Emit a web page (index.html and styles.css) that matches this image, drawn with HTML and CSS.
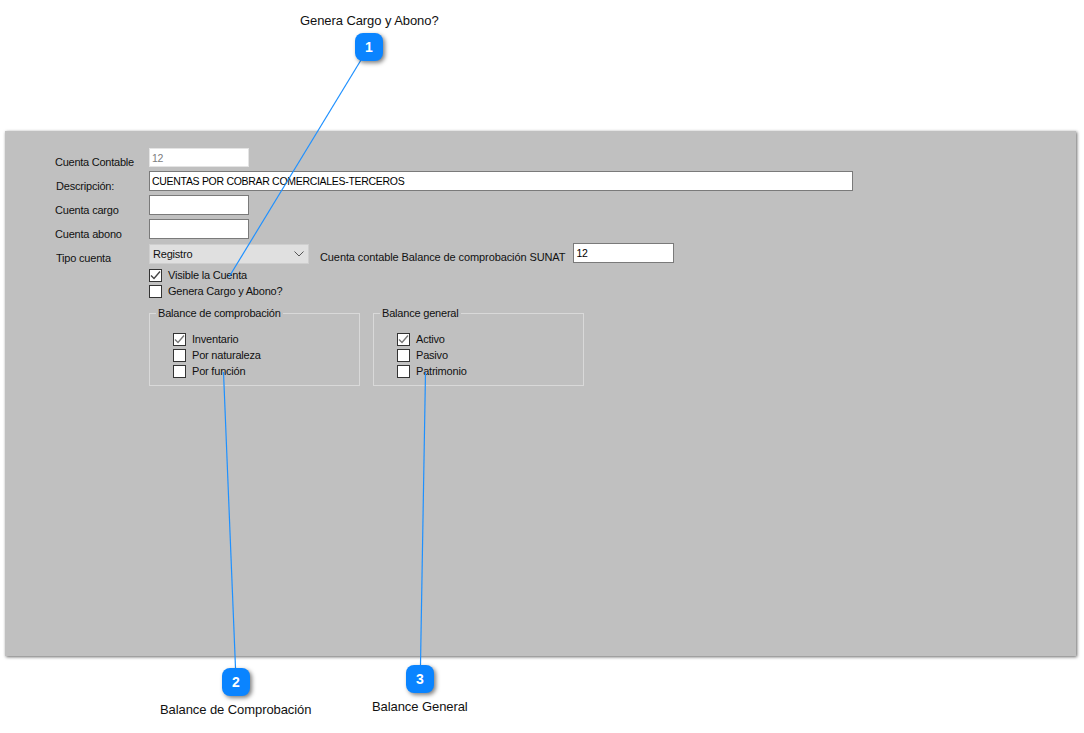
FILE: index.html
```html
<!DOCTYPE html>
<html>
<head>
  <meta charset="UTF-8">
  <title>Cuenta contable</title>
  <link rel="stylesheet" href="styles.css">
</head>
<body>
  <div class="page">
    <div class="panel">
      <div class="row row-contable">
        <label class="lbl lbl-contable">Cuenta Contable</label>
        <div class="input input-short input-disabled">12</div>
      </div>
      <div class="row row-desc">
        <label class="lbl lbl-desc">Descripción:</label>
        <div class="input input-long">CUENTAS POR COBRAR COMERCIALES-TERCEROS</div>
      </div>
      <div class="row row-cargo">
        <label class="lbl">Cuenta cargo</label>
        <div class="input input-short"></div>
      </div>
      <div class="row row-abono">
        <label class="lbl">Cuenta abono</label>
        <div class="input input-short"></div>
      </div>
      <div class="row row-tipo">
        <label class="lbl lbl-desc lbl-tipo">Tipo cuenta</label>
        <div class="select">
          <span>Registro</span>
          <svg class="chevron" width="10" height="6" viewBox="0 0 10 6"><path d="M0.5 0.5 L5 5 L9.5 0.5" fill="none" stroke="#555" stroke-width="1"/></svg>
        </div>
        <label class="lbl lbl-sunat">Cuenta contable Balance de comprobación SUNAT</label>
        <div class="input input-sunat">12</div>
      </div>

      <div class="checks">
        <div class="check">
          <span class="box"><svg width="11" height="11" viewBox="0 0 11 11"><path d="M1 5.5 L4 8.5 L10 1.5" fill="none" stroke="#444" stroke-width="1.4"/></svg></span>
          Visible la Cuenta
        </div>
        <div class="check">
          <span class="box"></span>
          Genera Cargo y Abono?
        </div>
      </div>

      <div class="groups">
        <fieldset class="group">
          <legend>Balance de comprobación</legend>
          <div class="check">
            <span class="box"><svg width="11" height="11" viewBox="0 0 11 11"><path d="M1 5.5 L4 8.5 L10 1.5" fill="none" stroke="#777" stroke-width="1.4"/></svg></span>
            Inventario
          </div>
          <div class="check"><span class="box"></span>Por naturaleza</div>
          <div class="check"><span class="box"></span>Por función</div>
        </fieldset>
        <fieldset class="group">
          <legend>Balance general</legend>
          <div class="check">
            <span class="box"><svg width="11" height="11" viewBox="0 0 11 11"><path d="M1 5.5 L4 8.5 L10 1.5" fill="none" stroke="#777" stroke-width="1.4"/></svg></span>
            Activo
          </div>
          <div class="check"><span class="box"></span>Pasivo</div>
          <div class="check"><span class="box"></span>Patrimonio</div>
        </fieldset>
      </div>
    </div>

    <!-- lineas de las anotaciones -->
    <svg class="lines" width="1084" height="733" viewBox="0 0 1084 733">
      <line x1="361" y1="60" x2="229" y2="277"/>
      <line x1="223.5" y1="372" x2="235.5" y2="668"/>
      <line x1="425.5" y1="372" x2="420.5" y2="665"/>
    </svg>

    <div class="note note-1">Genera Cargo y Abono?</div>
    <div class="badge badge-1">1</div>
    <div class="badge badge-2">2</div>
    <div class="note note-2">Balance de Comprobación</div>
    <div class="badge badge-3">3</div>
    <div class="note note-3">Balance General</div>
  </div>
</body>
</html>
```

FILE: styles.css
```css
html, body {
  margin: 0;
  padding: 0;
  background-color: #fff;
}
.page {
  position: relative;
  width: 1084px;
  height: 733px;
  overflow: hidden;
  padding-top: 131px;
  box-sizing: border-box;
  font-family: "Liberation Sans", Arial, sans-serif;
}
.panel {
  margin-left: 5px;
  width: 1071px;
  height: 525px;
  box-sizing: border-box;
  padding: 17px 0 0 50px;
  background-color: #c0c0c0;
  box-shadow: 1px 1px 3px rgba(0,0,0,0.6);
  font-size: 11px;
  letter-spacing: -0.2px;
  color: #111;
}
.row {
  display: flex;
  align-items: flex-start;
  height: 20px;
}
.row-desc { margin-top: 3px; }
.row-cargo { margin-top: 4px; }
.row-abono { margin-top: 4px; }
.row-tipo { margin-top: 5px; }
.lbl {
  display: block;
  width: 94px;
  flex: none;
  padding-top: 8px;
  line-height: 14px;
}
.lbl-contable {
  padding-top: 7px;
  letter-spacing: -0.25px;
}
.lbl-desc { padding-left: 1px; width: 93px; }
.lbl-tipo { padding-top: 7px; }
.input {
  box-sizing: border-box;
  height: 20px;
  background-color: #fff;
  border: 1px solid #7a7a7a;
  padding: 0 2px;
  line-height: 18px;
  font-size: 10.5px;
  letter-spacing: -0.3px;
  color: #000;
}
.input-short { width: 100px; }
.input-long { width: 704px; }
.input-disabled {
  height: 19px;
  border-color: #e4e4e4;
  color: #7d7d7d;
}
.input-sunat { width: 101px; margin-top: -1px; }
.select {
  box-sizing: border-box;
  width: 160px;
  height: 20px;
  display: flex;
  align-items: center;
  justify-content: space-between;
  padding: 0 4px 0 3px;
  background-color: #e0e0e0;
  border: 1px solid #cfcfcf;
}
.lbl-sunat {
  width: auto;
  padding-top: 6px;
  margin-left: 11px;
  margin-right: 8px;
  letter-spacing: -0.1px;
}
.checks {
  margin: 3px 0 0 94px;
}
.check {
  display: flex;
  align-items: center;
  gap: 6px;
  height: 16px;
  line-height: 16px;
}
.box {
  box-sizing: border-box;
  width: 13px;
  height: 13px;
  flex: none;
  display: flex;
  align-items: center;
  justify-content: center;
  background-color: #fff;
  border: 1px solid #333;
}
.groups {
  display: flex;
  gap: 13px;
  margin: 7px 0 0 94px;
}
.group {
  box-sizing: border-box;
  width: 211px;
  height: 80px;
  margin: 0;
  padding: 11px 0 0 23px;
  border: 1px solid #d9d9d9;
}
.group legend {
  margin-left: -17px;
  padding: 0 2px;
  line-height: 14px;
}
.lines {
  position: absolute;
  left: 0;
  top: 0;
}
.lines line {
  stroke: #1e90ff;
  stroke-width: 1.2;
}
.note {
  position: absolute;
  font-size: 13px;
  line-height: 16px;
  letter-spacing: -0.08px;
  color: #111;
  white-space: nowrap;
}
.note-1 { left: 300px; top: 13px; }
.note-2 { left: 160px; top: 702px; }
.note-3 { left: 372px; top: 699px; }
.badge {
  position: absolute;
  width: 28px;
  height: 28px;
  border-radius: 8px;
  background-color: #0a84ff;
  box-shadow: 2px 2px 4px rgba(0,0,0,0.5);
  color: #fff;
  font-size: 14px;
  font-weight: bold;
  line-height: 28px;
  text-align: center;
}
.badge-1 { left: 355px; top: 33px; }
.badge-2 { left: 222px; top: 668px; }
.badge-3 { left: 406px; top: 665px; }
```
